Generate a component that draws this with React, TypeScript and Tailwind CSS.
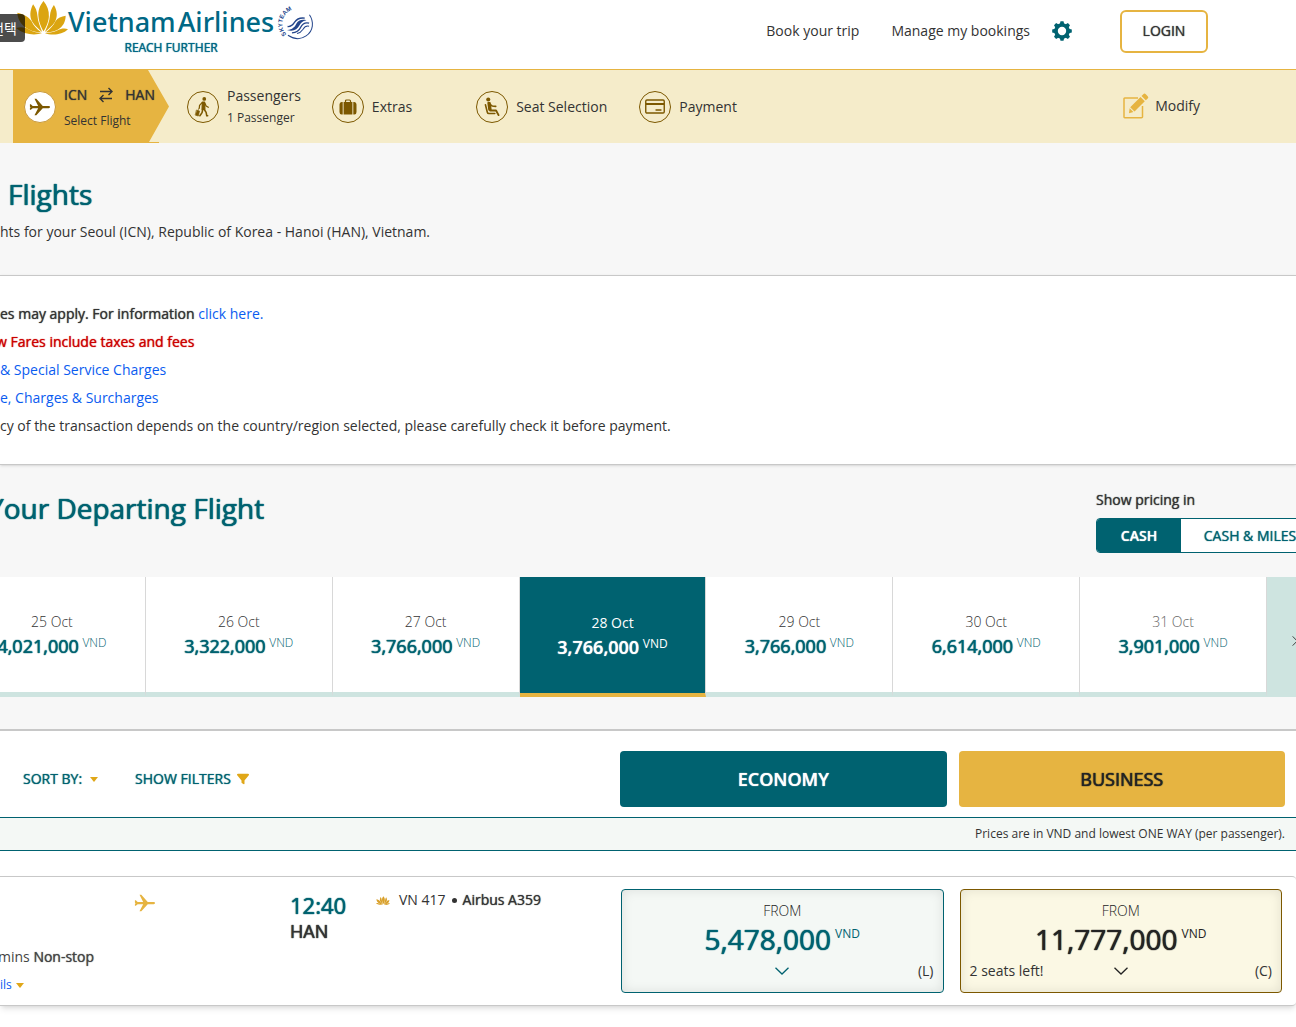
import { useState } from "react";
import type { ReactNode } from "react";
import { FaFilter } from "react-icons/fa6";

type Day = {
  date: string;
  price: string;
  muted?: boolean;
};

const days: Day[] = [
  { date: "25 Oct", price: "4,021,000" },
  { date: "26 Oct", price: "3,322,000" },
  { date: "27 Oct", price: "3,766,000" },
  { date: "28 Oct", price: "3,766,000" },
  { date: "29 Oct", price: "3,766,000" },
  { date: "30 Oct", price: "6,614,000" },
  { date: "31 Oct", price: "3,901,000", muted: true },
];

// regular weight with a slight thickening, used wherever the brand wants "bold"
const strong = "[text-shadow:0_0_1px_currentColor]";
const strongLarge = "[text-shadow:0_0_1px_currentColor,0_0_1px_currentColor]";

function Lotus({ className }: { className?: string }) {
  return (
    <svg viewBox="50 0 155 105" preserveAspectRatio="none" className={className} fill="currentColor" aria-hidden="true">
      <path d="M132 3C121 16 115 32 117 50C119 70 126 82 132 94C139 82 146 70 148 50C149 32 143 16 132 3Z" />
      <path d="M101 13C91 32 90 51 99 66C107 79 119 88 128 96C122 80 115 64 114 48C113 33 108 22 101 13Z" />
      <path d="M163 15C174 33 174 51 166 66C158 79 145 88 136 96C143 80 150 64 151 48C152 34 157 24 163 15Z" />
      <path d="M54 38C55 60 68 79 90 89C101 95 114 97 125 97C111 87 102 76 96 63C87 49 71 42 54 38Z" />
      <path d="M198 47C198 65 190 80 174 89C163 95 150 97 139 97C152 87 162 76 168 63C174 54 185 49 198 47Z" />
      <path d="M50 84C65 80 78 82 90 89C102 96 115 98 128 99C108 107 75 105 50 84Z" />
      <path d="M205 88C195 84 184 86 174 91C163 97 151 98 136 99C154 107 187 106 205 88Z" />
    </svg>
  );
}

function SkyTeam() {
  return (
    <svg
      viewBox="0 0 100 104"
      className="h-[35px] w-[34px] overflow-visible"
      fill="none"
      stroke="#24468c"
      aria-hidden="true"
    >
      <defs>
        <path id="skyteam-arc" d="M19 84A40 40 0 0 1 82 22" />
      </defs>
      <text fill="#24468c" stroke="none" className="font-['Liberation_Sans',sans-serif] text-[18px] font-bold">
        <textPath href="#skyteam-arc">SKYTEAM</textPath>
      </text>
      <path d="M87 26C101 47 99 74 77 89C60 101 40 98 23 87" strokeWidth="3" />
      <path d="M20 71C35 72 44 62 48 53C53 43 63 39 78 42C66 44 61 50 57 58C51 70 38 77 20 71Z" fill="#24468c" stroke="none" />
      <path d="M22 61C32 62 38 56 43 48C49 39 59 34 73 36" strokeWidth="4" />
      <path d="M35 80C49 79 57 72 61 63C66 53 74 48 86 51" strokeWidth="4" />
      <path d="M50 82C59 80 64 75 68 69C72 62 78 58 86 60" strokeWidth="3" />
    </svg>
  );
}

function Plane({ className }: { className?: string }) {
  return (
    <svg viewBox="0 0 24 20" className={className} fill="currentColor" aria-hidden="true">
      <path d="M1 7H2L4 9H10L6 1H8L15 9H21.5C23.5 9 23.5 11.4 21.5 11.4H15L8 19H6L10 11.4H4L2 13H1V10.8L2 10.2L1 9.6Z" />
    </svg>
  );
}

function Gear() {
  const teeth = [0, 45, 90, 135, 180, 225, 270, 315];
  return (
    <svg viewBox="0 0 20 20" className="size-5 text-[#006270]" fill="currentColor" aria-hidden="true">
      <circle cx="10" cy="10" r="6" fill="none" stroke="currentColor" strokeWidth="3.6" />
      {teeth.map((angle) => (
        <path key={angle} d="M7.5 4L8.5 .2H11.5L12.5 4Z" transform={`rotate(${angle} 10 10)`} />
      ))}
    </svg>
  );
}

function Traveller() {
  return (
    <svg
      viewBox="0 0 96 96"
      className="size-8"
      fill="none"
      stroke="currentColor"
      strokeLinecap="round"
      strokeLinejoin="round"
      aria-hidden="true"
    >
      <circle cx="52" cy="22" r="6" fill="currentColor" stroke="none" />
      <path d="M46 32L53 32L54 55L45 56Z" fill="currentColor" strokeWidth="4" />
      <path d="M45 34L37 43L36 52M54 36L58 45L65 49" strokeWidth="4" />
      <path d="M47 56L45 66L38 76M52 56L58 65L60 76H63" strokeWidth="5" />
      <path d="M35 52L32 59" strokeWidth="2" />
      <path d="M28 58L37 61L33 77L24 74Z" fill="currentColor" strokeWidth="2" />
    </svg>
  );
}

function Seat() {
  return (
    <svg
      viewBox="0 0 96 96"
      className="size-8"
      fill="none"
      stroke="currentColor"
      strokeLinecap="round"
      strokeLinejoin="round"
      aria-hidden="true"
    >
      <circle cx="36" cy="24" r="6.5" fill="currentColor" stroke="none" />
      <path d="M36 35L41 35L44 57L39 57Z" fill="currentColor" strokeWidth="6" />
      <path d="M41 39L49 45L60 46" strokeWidth="5" />
      <path d="M42 59H61L69 74" strokeWidth="6" />
      <path d="M27 41L33 65Q34 69 38 69H57" strokeWidth="5" />
    </svg>
  );
}

function Suitcase() {
  return (
    <svg viewBox="0 0 18 16" className="h-4 w-[18px]" fill="currentColor" aria-hidden="true">
      <path d="M4.6 3H13.4V15.5H4.6Z" />
      <path d="M3.7 3V15.5H2.6Q.5 15.5.5 13V5.5Q.5 3 2.6 3ZM14.3 3V15.5H15.4Q17.5 15.5 17.5 13V5.5Q17.5 3 15.4 3Z" />
      <path d="M6.5 3V2Q6.5 1 7.5 1H10.5Q11.5 1 11.5 2V3" fill="none" stroke="currentColor" strokeWidth="1.2" />
    </svg>
  );
}

function Card() {
  return (
    <svg viewBox="0 0 20 15" className="h-[15px] w-5" fill="none" stroke="currentColor" aria-hidden="true">
      <rect x=".75" y="1" width="18.5" height="13" rx="1.2" strokeWidth="1.4" />
      <path d="M1 5H19" strokeWidth="2" />
      <path d="M11 11H16" strokeWidth="1.3" strokeLinecap="round" />
    </svg>
  );
}

function Pencil() {
  return (
    <svg viewBox="0 0 26 26" className="size-[26px] text-[#e6b441]" fill="currentColor" aria-hidden="true">
      <path
        d="M15 5H1.7Q1 5 1 5.7V24Q1 24.7 1.7 24.7H18.3Q19.5 24.7 19.5 24V13"
        fill="none"
        stroke="currentColor"
        strokeWidth="1.5"
      />
      <path d="M17.5 4L21.8 8.3L11.5 18.5L7.2 14.3ZM6.6 15.3L10.4 19L6 20.2ZM18.5 3L20.3 1.2Q21.5 0 22.8 1.2L24.7 3.2Q26 4.5 24.7 5.6L22.8 7.3Z" />
    </svg>
  );
}

function Swap() {
  return (
    <svg viewBox="0 0 14 16" className="h-4 w-3.5" fill="none" stroke="currentColor" strokeWidth="1.4" aria-hidden="true">
      <path d="M1 4.5H13M9.5 1L13 4.5L9.5 8M13 11.5H1M4.5 8L1 11.5L4.5 15" />
    </svg>
  );
}

function Chevron({ className }: { className?: string }) {
  return (
    <svg viewBox="0 0 14 8" className={className} fill="none" stroke="currentColor" strokeWidth="1.3" aria-hidden="true">
      <path d="M.5 .7L7 7L13.5 .7" />
    </svg>
  );
}

function Caret() {
  return (
    <svg viewBox="0 0 8 5" className="h-[5px] w-2 text-[#e0a718]" fill="currentColor" aria-hidden="true">
      <path d="M0 0H8L4 5Z" />
    </svg>
  );
}

function Step({ icon, label, note, className }: { icon: ReactNode; label: string; note?: string; className: string }) {
  return (
    <li className={"flex items-center gap-2 " + className}>
      <span className="flex size-8 items-center justify-center rounded-full border border-[#7c5800] text-[#7c5800]">
        {icon}
      </span>
      <span>
        <span className="block leading-[22px]">{label}</span>
        {note && <span className="block text-xs leading-[22px]">{note}</span>}
      </span>
    </li>
  );
}

function Header() {
  return (
    <header className="relative flex h-[69px] justify-between bg-white pr-[88px] pl-4">
      <span className="absolute top-3.5 left-0 z-10 flex h-7 w-[25px] items-center justify-end overflow-hidden rounded-r bg-black/70 pr-2 font-['Noto_Sans_CJK_KR',sans-serif] text-sm whitespace-nowrap text-white">
        선택
      </span>
      <a href="#" className="flex text-[#006885]">
        <Lotus className="h-[35px] w-[52px] text-[#dba511]" />
        <span className="flex flex-col items-center font-['Noto_Sans',sans-serif]">
          <span className="flex gap-0.5 pt-1 text-[27px] leading-9 font-medium">
            <span>Vietnam</span>
            <span>Airlines</span>
          </span>
          <span className={"text-xs leading-4 " + strong}>REACH FURTHER</span>
        </span>
        <span className="pt-1.5 pl-1.5">
          <SkyTeam />
        </span>
      </a>
      <nav className="flex h-[62px] items-center">
        <a href="#" className="mr-8">Book your trip</a>
        <a href="#" className="mr-[22px]">Manage my bookings</a>
        <button aria-label="Settings" className="mr-12">
          <Gear />
        </button>
        <button className={"h-[43px] w-[88px] rounded-md border-2 border-[#e6b441] " + strong}>LOGIN</button>
      </nav>
    </header>
  );
}

function Steps() {
  return (
    <div className="flex h-[74px] items-center justify-between border-t border-[#e6b441] bg-[#f5ecca] pr-24 pl-[13px]">
      <ol className="flex h-full items-center">
        <li className="relative h-full w-[156px]">
          <svg viewBox="0 0 156 73" className="absolute inset-0 size-full" preserveAspectRatio="none" aria-hidden="true">
            <path d="M0 0H135L156 36.5L136 72H146V73H0Z" fill="#e6b441" />
          </svg>
          <a href="#" className="relative flex h-full items-center gap-2 pl-[11px]">
            <span className="flex size-8 items-center justify-center rounded-full border border-[#c9993a] bg-white text-[#7c5800]">
              <Plane className="h-5 w-[22px]" />
            </span>
            <span className="pt-0.5">
              <span className={"flex items-center gap-3 leading-[26px] " + strong}>
                ICN <Swap /> HAN
              </span>
              <span className="block text-xs leading-[26px]">Select Flight</span>
            </span>
          </a>
        </li>
        <Step className="ml-[18px]" icon={<Traveller />} label="Passengers" note="1 Passenger" />
        <Step className="ml-[31px]" icon={<Suitcase />} label="Extras" />
        <Step className="ml-16" icon={<Seat />} label="Seat Selection" />
        <Step className="ml-8" icon={<Card />} label="Payment" />
      </ol>
      <button className="flex items-center gap-1.5 pb-0.5">
        <Pencil />
        Modify
      </button>
    </div>
  );
}

function Notices() {
  return (
    <div className="relative border-y border-[#c8c8c8] bg-white py-6 leading-7 shadow-sm">
      <p>
        <span className={strong}>es may apply. For information</span>{" "}
        <a href="#" className="text-[#0a5cf0]">click here.</a>
      </p>
      <p className={"-ml-1 text-[#cc0000] " + strong}>w Fares include taxes and fees</p>
      <p>
        <a href="#" className="text-[#0a5cf0]">&amp; Special Service Charges</a>
      </p>
      <p>
        <a href="#" className="text-[#0a5cf0]">e, Charges &amp; Surcharges</a>
      </p>
      <p>
        cy of the transaction depends on the country/region selected, please carefully check it before payment.
      </p>
    </div>
  );
}

function DayStrip() {
  const [selected, setSelected] = useState(3);

  return (
    <div className="mt-6 -mr-[27px] -ml-[41px] flex h-[120px]">
      {days.map((day, i) => (
        <button
          key={day.date}
          onClick={() => setSelected(i)}
          className={
            i === selected
              ? "flex-1 border-r border-b-4 border-r-[#d8d8d8] border-b-[#e6b441] bg-[#006270] pt-0.5 text-white"
              : "flex-1 border-r border-b-[5px] border-r-[#d8d8d8] border-b-[#cee4e0] bg-white font-light"
          }
        >
          <span className={day.muted ? "block leading-6 text-[#666]" : "block leading-6 text-current"}>{day.date}</span>
          <span className={i === selected ? "block leading-6" : "block leading-6 text-[#006270]"}>
            <span
              className={
                i === selected
                  ? "text-lg leading-6 font-semibold " + strong
                  : "text-lg leading-6 font-normal " + strongLarge
              }
            >
              {day.price}
            </span>{" "}
            <sup className="text-xs">VND</sup>
          </span>
        </button>
      ))}
      <button aria-label="Next days" className="flex w-14 items-center justify-center bg-[#cee4e0] pt-2">
        <Chevron className="h-1.5 w-2.5 -rotate-90" />
      </button>
    </div>
  );
}

function Fare({ price, code, seats, className }: { price: string; code: string; seats?: string; className: string }) {
  return (
    <button
      className={
        "flex h-[104px] flex-col items-center rounded border pt-2.5 shadow-[inset_0_0_12px_rgba(0,0,0,0.1)] " + className
      }
    >
      <span className="leading-[22px] font-light text-[#232323]">FROM</span>
      <span className="flex items-start gap-1">
        <span className={"text-[28px] leading-[34px] " + strongLarge}>{price}</span>
        <span className="text-xs leading-6">VND</span>
      </span>
      <span className="grid w-full grid-cols-3 items-center px-[9px] leading-[30px]">
        <span className="text-left text-[#333]">{seats}</span>
        <Chevron className="h-2 w-3.5 justify-self-center" />
        <span className="text-right text-[#333]">({code})</span>
      </span>
    </button>
  );
}

export default function App() {
  const [pricing, setPricing] = useState("cash");

  return (
    <div className="overflow-x-hidden bg-white font-['Open_Sans',sans-serif] text-sm text-[#333]">
      <Header />
      <Steps />

      <section className="h-[132px] bg-[#f7f7f7] pt-[31px]">
        <h1 className={"pl-2 text-[28px] leading-10 text-[#006270] " + strongLarge}>Flights</h1>
        <p className="mt-1.5 leading-6">hts for your Seoul (ICN), Republic of Korea - Hanoi (HAN), Vietnam.</p>
      </section>

      <Notices />

      <section className="bg-[#f7f7f7] pb-8">
        <div className="flex h-[88px] justify-between">
          <h2 className={"-ml-3 pt-[23px] text-[28px] leading-10 text-[#006270] " + strongLarge}>
            Your Departing Flight
          </h2>
          <div className="-mr-6 w-56 pt-6">
            <p className={"leading-[22px] " + strong}>Show pricing in</p>
            <div className="mt-[7px] flex h-[35px] overflow-hidden rounded border border-[#006270] bg-white">
              <button
                onClick={() => setPricing("cash")}
                className={
                  pricing === "cash"
                    ? "w-[84px] bg-[#006270] font-semibold text-white " + strong
                    : "w-[84px] text-[#006270] " + strong
                }
              >
                CASH
              </button>
              <button
                onClick={() => setPricing("miles")}
                className={
                  pricing === "miles"
                    ? "flex-1 bg-[#006270] font-semibold text-white " + strong
                    : "flex-1 text-[#006270] " + strong
                }
              >
                CASH &amp; MILES
              </button>
            </div>
          </div>
        </div>
        <DayStrip />
      </section>

      <section className="border-t-2 border-[#c8c8c8]">
        <div className="grid h-[86px] grid-cols-[608px_1fr_1fr] gap-3 pt-5 pr-[11px] pb-2.5">
          <div className="flex items-center gap-[37px] pl-[23px] text-[#006270]">
            <button className={"flex items-center gap-2 " + strong}>
              SORT BY: <Caret />
            </button>
            <button className={"flex items-center gap-1.5 " + strong}>
              SHOW FILTERS <FaFilter className="size-3 text-[#e0a718]" />
            </button>
          </div>
          <button className={"rounded bg-[#006270] text-lg font-semibold text-white " + strong}>ECONOMY</button>
          <button className={"rounded bg-[#e6b441] text-lg text-[#232323] " + strongLarge}>BUSINESS</button>
        </div>
        <p className="border-y border-[#006270] bg-[#f4f8f5] pr-[11px] text-right text-xs leading-8">
          Prices are in VND and lowest ONE WAY (per passenger).
        </p>
      </section>

      <article className="mt-[25px] mb-5 grid grid-cols-[605px_1fr_1fr] gap-4 rounded-r border-y border-[#c8c8c8] py-3 pr-3.5 shadow-md">
        <div className="flex">
          <div className="w-[290px]">
            <div className="flex h-14 justify-center pt-1">
              <Plane className="h-5 w-[22px] text-[#e6b441]" />
            </div>
            <p className="-ml-0.5 leading-6 text-[#444]">
              mins <span className={strong}>Non-stop</span>
            </p>
            <a href="#" className="mt-2 flex items-center gap-1 text-xs leading-4 text-[#0a5cf0]">
              ils <Caret />
            </a>
          </div>
          <div className="w-[86px]">
            <p className={"text-[22px] leading-8 text-[#006270] " + strongLarge}>12:40</p>
            <p className={"text-lg leading-5 " + strongLarge}>HAN</p>
          </div>
          <p className="flex h-[22px] items-center">
            <Lotus className="mr-[9px] h-[9px] w-3.5 text-[#d9a02a]" />
            VN 417
            <span className="mx-1.5 size-[5px] rounded-full bg-[#333]" />
            <span className={strong}>Airbus A359</span>
          </p>
        </div>
        <Fare price="5,478,000" code="L" className="border-[#006270] bg-[#f4f8f5] text-[#006270]" />
        <Fare
          price="11,777,000"
          code="C"
          seats="2 seats left!"
          className="border-[#7c5800] bg-[#fbf8e4] text-[#232323]"
        />
      </article>
    </div>
  );
}
